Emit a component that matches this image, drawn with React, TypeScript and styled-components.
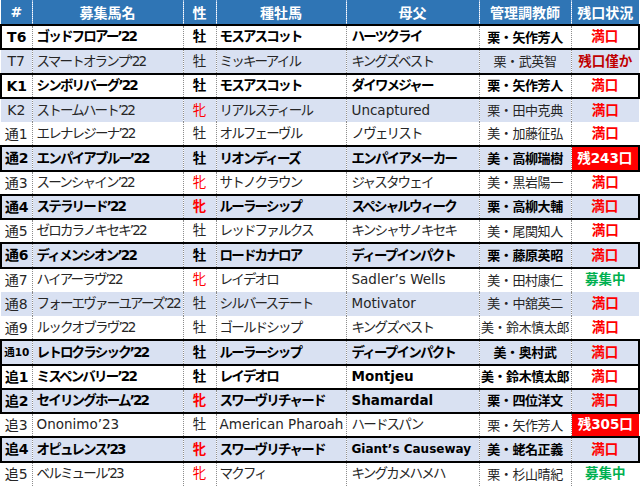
import React from 'react';
import styled, { createGlobalStyle } from 'styled-components';

const GlobalStyle = createGlobalStyle`
  html, body {
    margin: 0;
    padding: 0;
    background: #ffffff;
  }
`

type Tone = 'full' | 'few' | 'open' | 'left'

type Entry = {
  no: string
  name: string
  sex: '牡' | '牝'
  sire: string
  damSire: string
  trainer: string
  status: string
  tone: Tone
  bold?: boolean
  fit?: boolean // excel shrink-to-fit on the dam sire cell
}

const entries: Entry[] = [
  { no: 'T6', name: 'ゴッドフロアー’22', sex: '牡', sire: 'モスアスコット', damSire: 'ハーツクライ', trainer: '栗・矢作芳人', status: '満口', tone: 'full', bold: true },
  { no: 'T7', name: 'スマートオランプ’22', sex: '牡', sire: 'ミッキーアイル', damSire: 'キングズベスト', trainer: '栗・武英智', status: '残口僅か', tone: 'few' },
  { no: 'K1', name: 'シンボリバーグ’22', sex: '牡', sire: 'モスアスコット', damSire: 'ダイワメジャー', trainer: '栗・矢作芳人', status: '満口', tone: 'full', bold: true },
  { no: 'K2', name: 'ストームハート’22', sex: '牝', sire: 'リアルスティール', damSire: 'Uncaptured', trainer: '栗・田中克典', status: '満口', tone: 'full' },
  { no: '通1', name: 'エレナレジーナ’22', sex: '牡', sire: 'オルフェーヴル', damSire: 'ノヴェリスト', trainer: '美・加藤征弘', status: '満口', tone: 'full' },
  { no: '通2', name: 'エンパイアブルー’22', sex: '牡', sire: 'リオンディーズ', damSire: 'エンパイアメーカー', trainer: '美・高柳瑞樹', status: '残243口', tone: 'left', bold: true },
  { no: '通3', name: 'スーンシャイン’22', sex: '牝', sire: 'サトノクラウン', damSire: 'ジャスタウェイ', trainer: '美・黒岩陽一', status: '満口', tone: 'full' },
  { no: '通4', name: 'ステラリード’22', sex: '牝', sire: 'ルーラーシップ', damSire: 'スペシャルウィーク', trainer: '栗・高柳大輔', status: '満口', tone: 'full', bold: true },
  { no: '通5', name: 'ゼロカラノキセキ’22', sex: '牡', sire: 'レッドファルクス', damSire: 'キンシャサノキセキ', trainer: '美・尾関知人', status: '満口', tone: 'full' },
  { no: '通6', name: 'ディメンシオン’22', sex: '牡', sire: 'ロードカナロア', damSire: 'ディープインパクト', trainer: '栗・藤原英昭', status: '満口', tone: 'full', bold: true },
  { no: '通7', name: 'ハイアーラヴ’22', sex: '牝', sire: 'レイデオロ', damSire: 'Sadler’s Wells', trainer: '美・田村康仁', status: '募集中', tone: 'open' },
  { no: '通8', name: 'フォーエヴァーユアーズ’22', sex: '牡', sire: 'シルバーステート', damSire: 'Motivator', trainer: '美・中舘英二', status: '満口', tone: 'full' },
  { no: '通9', name: 'ルックオブラヴ’22', sex: '牡', sire: 'ゴールドシップ', damSire: 'キングズベスト', trainer: '美・鈴木慎太郎', status: '満口', tone: 'full' },
  { no: '通10', name: 'レトロクラシック’22', sex: '牡', sire: 'ルーラーシップ', damSire: 'ディープインパクト', trainer: '美・奥村武', status: '満口', tone: 'full', bold: true },
  { no: '追1', name: 'ミスペンバリー’22', sex: '牡', sire: 'レイデオロ', damSire: 'Montjeu', trainer: '美・鈴木慎太郎', status: '満口', tone: 'full', bold: true },
  { no: '追2', name: 'セイリングホーム’22', sex: '牝', sire: 'スワーヴリチャード', damSire: 'Shamardal', trainer: '栗・四位洋文', status: '満口', tone: 'full', bold: true },
  { no: '追3', name: 'Ononimo’23', sex: '牡', sire: 'American Pharoah', damSire: 'ハードスパン', trainer: '栗・矢作芳人', status: '残305口', tone: 'left' },
  { no: '追4', name: 'オピュレンス’23', sex: '牝', sire: 'スワーヴリチャード', damSire: 'Giant’s Causeway', trainer: '美・蛯名正義', status: '満口', tone: 'full', bold: true, fit: true },
  { no: '追5', name: 'ベルミュール’23', sex: '牝', sire: 'マクフィ', damSire: 'キングカメハメハ', trainer: '栗・杉山晴紀', status: '募集中', tone: 'open' },
]

const columns = [
  { label: '#', width: 31 },
  { label: '募集馬名', width: 151 },
  { label: '性', width: 33 },
  { label: '種牡馬', width: 130 },
  { label: '母父', width: 133 },
  { label: '管理調教師', width: 92 },
  { label: '残口状況', width: 68 },
]

const toneColor: Record<Tone, string> = {
  full: '#ff0000',
  few: '#c00000',
  open: '#00b050',
  left: '#ffffff',
}

const kana = /[\u30a0-\u30ff]/
const squeezed = (s: string) => kana.test(s)

const SheetStyled = styled.table`
  width: 638px;
  table-layout: fixed;
  border-collapse: collapse;
  font-family: "DejaVu Sans", "Noto Sans CJK JP", sans-serif;
  font-size: 13.5px;
`

const HeadRowStyled = styled.tr`
  height: 25px;
  background: #2f75b5;
`

const HeadCellStyled = styled.th`
  padding: 0;
  color: #ffffff;
  font-size: 14px;
  font-weight: 700;
  text-align: center;
  border-left: 1px dotted #a9c4e6;
  white-space: nowrap;
  overflow: hidden;

  &:first-child {
    border-left: none;
  }
`

const RowStyled = styled.tr<{ $bold?: boolean; $shaded: boolean }>`
  height: 24.26px;
  background: ${p => (p.$shaded ? '#d9e1f2' : '#ffffff')};
  font-weight: ${p => (p.$bold ? 700 : 400)};
  color: ${p => (p.$bold ? '#000000' : '#262626')};

  & > td {
    border-top: ${p => (p.$bold ? '2px solid #000' : 'none')};
    border-bottom: ${p => (p.$bold ? '2px solid #000' : 'none')};
  }

  & > td:first-child {
    border-left: ${p => (p.$bold ? '2px solid #000' : 'none')};
  }

  & > td:last-child {
    border-right: ${p => (p.$bold ? '2px solid #000' : 'none')};
  }
`

const CellStyled = styled.td<{ $align?: 'left' | 'center'; $pad?: number; $squeeze?: boolean; $fit?: boolean }>`
  padding: 0 0 0 ${p => p.$pad ?? 0}px;
  text-align: ${p => p.$align ?? 'left'};
  white-space: nowrap;
  overflow: hidden;
  border-left: 1px dotted #8c8c8c;
  line-height: 1;
  letter-spacing: ${p => (p.$squeeze ? '-1.8px' : 'normal')};
  font-size: ${p => (p.$fit ? '12px' : 'inherit')};

  &:first-child {
    border-left-style: none;
  }
`

const NoCellStyled = styled(CellStyled)<{ $long: boolean }>`
  text-align: center;
  font-size: ${p => (p.$long ? '10.5px' : '14px')};
`

const SexCellStyled = styled(CellStyled)<{ $mare: boolean }>`
  text-align: center;
  color: ${p => (p.$mare ? '#ff0000' : 'inherit')};
`

const TrainerCellStyled = styled(CellStyled)`
  text-align: center;
  font-size: 13px;
  letter-spacing: -0.4px;
`

const StatusCellStyled = styled(CellStyled)<{ $tone: Tone }>`
  text-align: center;
  font-weight: 700;
  color: ${p => toneColor[p.$tone]};
  background: ${p => (p.$tone === 'left' ? '#ff0000' : 'transparent')};
`

export default function App() {
  return <>
    <GlobalStyle/>
    <SheetStyled>
      <colgroup>
        {columns.map(c => <col key={c.label} style={{ width: c.width }}/>)}
      </colgroup>
      <thead>
        <HeadRowStyled>
          {columns.map(c => <HeadCellStyled key={c.label}>{c.label}</HeadCellStyled>)}
        </HeadRowStyled>
      </thead>
      <tbody>
        {entries.map((e, i) => (
          <RowStyled key={e.no} $bold={e.bold} $shaded={i % 2 === 1}>
            <NoCellStyled $long={e.no.length > 2}>{e.no}</NoCellStyled>
            <CellStyled $pad={4} $squeeze={squeezed(e.name)}>{e.name}</CellStyled>
            <SexCellStyled $mare={e.sex === '牝'}>{e.sex}</SexCellStyled>
            <CellStyled $pad={3} $squeeze={squeezed(e.sire)}>{e.sire}</CellStyled>
            <CellStyled $pad={5} $squeeze={squeezed(e.damSire)} $fit={e.fit}>{e.damSire}</CellStyled>
            <TrainerCellStyled>{e.trainer}</TrainerCellStyled>
            <StatusCellStyled $tone={e.tone}>{e.status}</StatusCellStyled>
          </RowStyled>
        ))}
      </tbody>
    </SheetStyled>
  </>
}
